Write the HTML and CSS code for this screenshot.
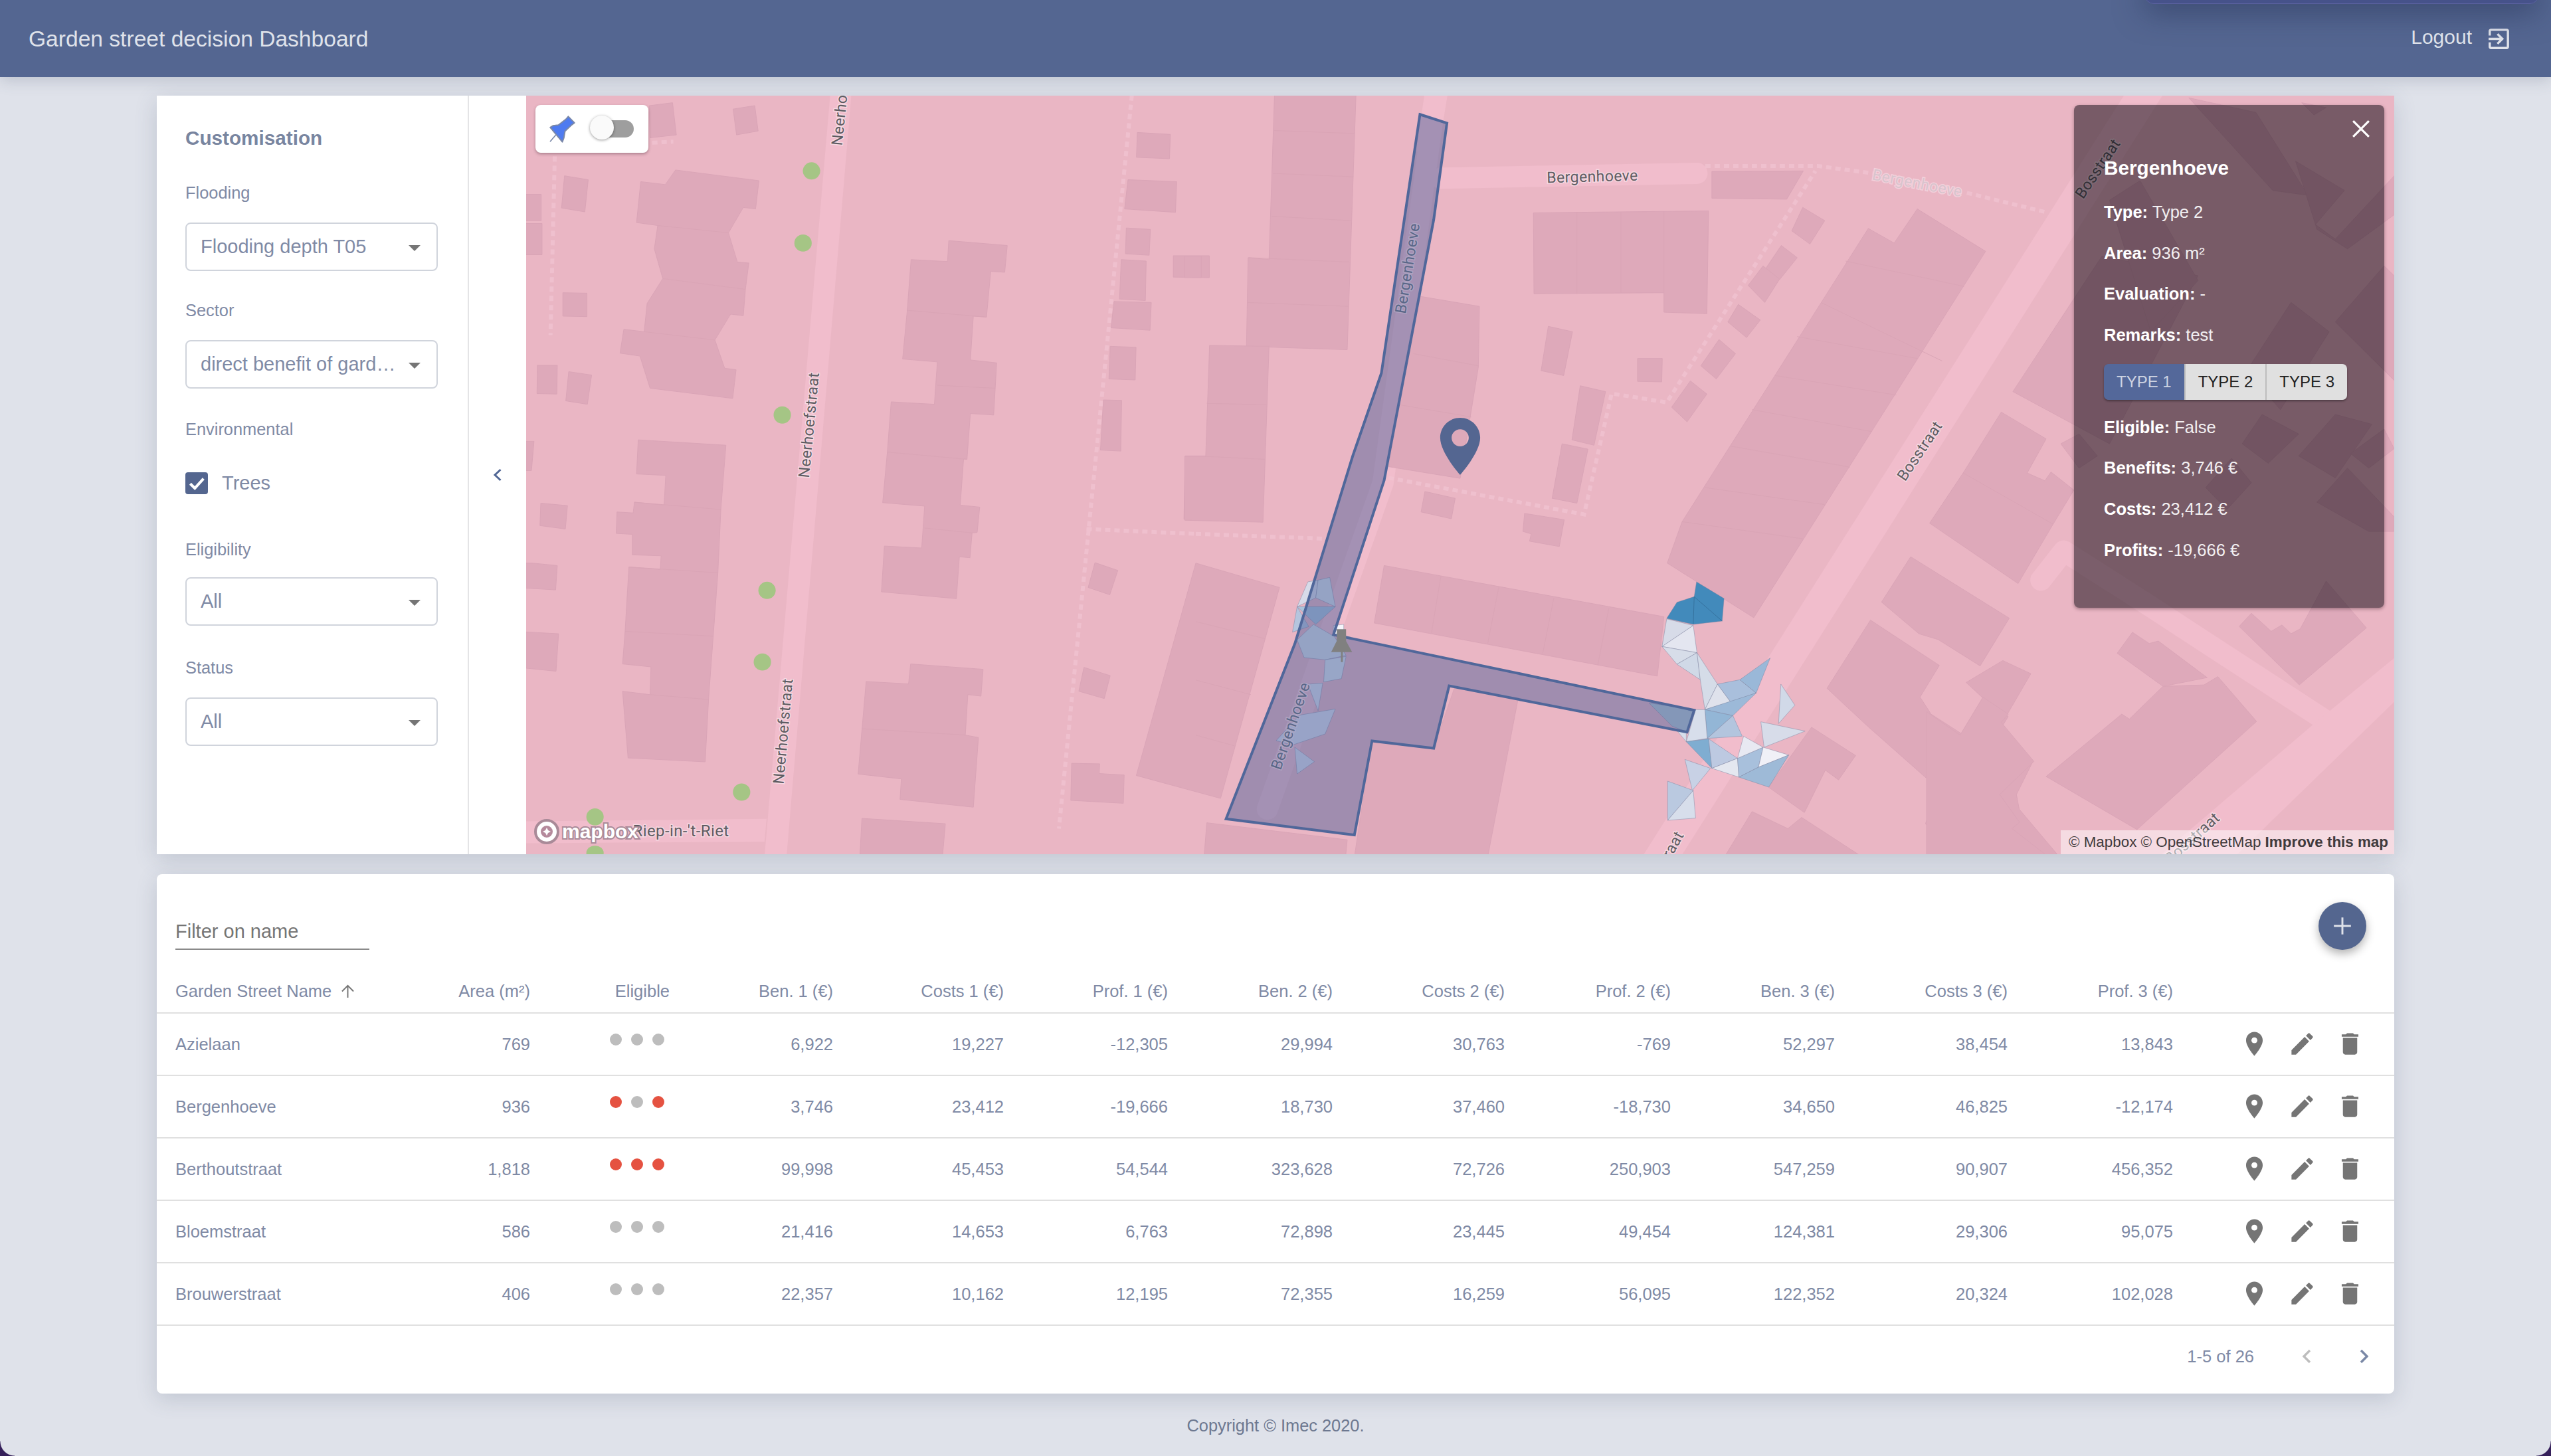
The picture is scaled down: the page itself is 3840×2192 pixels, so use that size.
FILE: index.html
```html
<!DOCTYPE html>
<html lang="en">
<head>
<meta charset="utf-8">
<title>Garden street decision Dashboard</title>
<link rel="stylesheet" href="styles.css">
</head>
<body>
<header class="topbar">
  <div class="topbar-sheet"></div>
  <h1 class="app-title">Garden street decision Dashboard</h1>
  <div class="logout">
    <span class="logout-text">Logout</span>
    <svg class="logout-icon" viewBox="0 0 24 24"><path d="M10.09 15.59L11.5 17l5-5-5-5-1.41 1.41L12.67 11H3v2h9.67l-2.58 2.59zM19 3H5c-1.11 0-2 .9-2 2v4h2V5h14v14H5v-4H3v4c0 1.1.89 2 2 2h14c1.1 0 2-.9 2-2V5c0-1.1-.9-2-2-2z"/></svg>
  </div>
</header>

<main class="content">
  <section class="map-card">
    <aside class="sidebar">
      <h2 class="side-title">Customisation</h2>
      <div class="field-label gap-flooding">Flooding</div>
      <div class="select gap-select"><span class="select-text">Flooding depth T05</span><i class="caret"></i></div>
      <div class="field-label gap-sector">Sector</div>
      <div class="select gap-select"><span class="select-text">direct benefit of garden streets</span><i class="caret"></i></div>
      <div class="field-label gap-env">Environmental</div>
      <label class="check-row">
        <span class="checkbox"><svg viewBox="0 0 24 24"><path d="M5 12.5l5 5L19.5 7" /></svg></span>
        <span>Trees</span>
      </label>
      <div class="field-label gap-elig">Eligibility</div>
      <div class="select gap-select-b"><span class="select-text">All</span><i class="caret"></i></div>
      <div class="field-label gap-status">Status</div>
      <div class="select gap-select"><span class="select-text">All</span><i class="caret"></i></div>
    </aside>
    <div class="collapse">
      <svg class="collapse-icon" viewBox="0 0 14 20"><path d="M11.5 2L3 10l8.5 8"/></svg>
    </div>
    <div class="map">
      <svg class="map-svg" viewBox="792 144 2812 1142" preserveAspectRatio="none">
        <rect class="land" x="792" y="144" width="2812" height="1142"/>

        <!-- roads, page coordinates -->
        <polygon class="road" points="3197,144 3255,144 2530,1290 2472,1290"/>

        <g transform="translate(800 140) scale(.63776 .73342)">
          <polygon class="road" points="705,5 755,5 602,1568 550,1568"/>
          <polygon class="road" points="-20,1495 555,1490 550,1537 -20,1540"/>
          <path class="foot" d="M55 130L45 497M1417 5L1245 1510M1310 895L1568 905M285 102L335 100"/>
        </g>

        <g transform="translate(1800 140) scale(.82908 .73342)">
          <polygon class="road" points="415,5 457,5 440,120 400,120"/>
          <path class="road-line" d="M436 5L340 800L130 1470"/>
          <path class="road-line" d="M445 175L910 165"/>
          <path class="foot" d="M0 905L235 915M350 790L705 865L755 617L855 635L1125 160M925 150L1130 150L1230 165M1400 205L1545 245"/>
        </g>

        <g transform="translate(2900 140) scale(.45918 .73342)">
          <path class="road-line" d="M375 1000L450 940L700 1040L1300 1285"/>
          <polygon class="road" points="1533,1160 1533,1250 1010,1568 760,1568 1270,1295"/>
        </g>

        <!-- buildings: west block -->
        <g class="blds" transform="translate(800 140) scale(.63776 .73342)">
          <polygon points="278,26 333,20 342,86 280,92"/>
          <polygon points="476,33 527,26 535,78 484,86"/>
          <polygon points="78,170 134,178 126,244 71,236"/>
          <polygon points="-20,208 23,208 23,262 -20,262"/>
          <polygon points="-20,268 25,268 25,332 -20,332"/>
          <polygon points="74,410 131,411 131,459 74,458"/>
          <polygon points="258,182 316,188 340,158 537,180 529,238 500,235 465,287 486,347 513,349 505,403 500,457 470,454 433,507 456,565 483,568 475,627 280,606 256,540 209,534 218,485 266,490 273,432 310,381 290,320 298,272 248,266"/>
          <polygon points="14,559 61,559 60,618 13,617"/>
          <polygon points="88,572 142,579 132,639 81,632"/>
          <polygon points="252,712 459,723 447,855 440,985 429,1115 418,1245 410,1373 228,1365 215,1228 280,1235 282,1178 215,1172 221,1105 230,973 304,978 306,950 238,948 238,906 200,904 202,860 240,862 243,840 313,846 317,785 248,782"/>
          <polygon points="22,842 85,847 80,895 20,888"/>
          <polygon points="2,965 61,970 57,1020 -20,1016 -20,965"/>
          <polygon points="-20,1106 64,1110 58,1187 -20,1180"/>
          <polygon points="-20,715 6,715 0,775 -20,775"/>
          <polygon points="985,303 1123,313 1117,368 1084,366 1074,460 1043,458 1036,548 1098,554 1091,661 1036,658 1028,752 1020,751 1012,846 1058,850 1052,902 1040,903 1035,954 1010,952 1003,1038 826,1024 833,930 921,934 928,848 829,841 840,737 849,634 951,639 958,552 876,546 887,446 896,342 982,346"/>
          <polygon points="895,1172 1066,1183 1061,1238 1030,1235 1024,1318 1055,1323 1043,1466 870,1450 873,1408 771,1398 790,1208 890,1213"/>
          <polygon points="780,1489 977,1500 970,1568 775,1568"/>
          <polygon points="1430,81 1508,85 1506,135 1428,132"/>
          <polygon points="1408,178 1523,182 1520,245 1400,238"/>
          <polygon points="1404,277 1461,280 1458,333 1402,330"/>
          <polygon points="1392,342 1451,345 1449,426 1388,423"/>
          <polygon points="1375,428 1463,430 1460,487 1368,482"/>
          <polygon points="1366,520 1427,522 1425,589 1363,587"/>
          <polygon points="1350,630 1393,631 1391,735 1343,733"/>
          <polygon points="1515,334 1600,334 1600,379 1515,378"/>
          <polygon points="1543,745 1600,745 1600,877 1540,875"/>
          <polygon points="1330,964 1384,980 1365,1030 1314,1015"/>
          <polygon points="1304,1179 1366,1196 1352,1243 1292,1228"/>
          <polygon points="1275,1376 1341,1377 1340,1397 1399,1400 1397,1458 1273,1452"/>
          <path class="seam" d="M298 272L465 287M310 381L505 403M266 490L433 507M243 840L447 855M230 973L440 985M221 1105L429 1115M280 1235L418 1245M887 446L1074 460M958 600L1093 606M840 737L1028 752M928 893L1040 903M780 1305L1024 1318"/>
        </g>

        <!-- buildings: central block -->
        <g class="blds" transform="translate(1800 140) scale(.82908 .73342)">
          <polygon points="-108,1401 0,965 152,1015 45,1448"/>
          <polygon points="143,0 291,0 275,527 92,520 95,338 133,342"/>
          <polygon points="25,518 133,520 122,881 -20,877 -20,746 18,746"/>
          <polygon points="-20,335 10,335 10,379 -20,379"/>
          <polygon points="405,417 515,438 513,563 480,791 350,767"/>
          <polygon points="613,246 931,242 928,453 850,450 850,410 614,412"/>
          <polygon points="937,161 1103,160 1073,218 937,216"/>
          <polygon points="640,479 684,490 668,580 627,570"/>
          <polygon points="698,601 744,613 723,723 683,712"/>
          <polygon points="665,720 712,731 692,842 647,832"/>
          <polygon points="802,545 847,545 846,593 802,592"/>
          <polygon points="416,818 471,832 464,874 409,860"/>
          <polygon points="597,863 669,876 660,931 606,920 609,905 594,900"/>
          <polygon points="1102,235 1142,262 1115,310 1082,283"/>
          <polygon points="1063,313 1092,338 1060,383 1035,360"/>
          <polygon points="1030,355 1060,382 1033,430 1003,395"/>
          <polygon points="985,434 1025,466 1000,502 966,470"/>
          <polygon points="950,506 980,535 945,587 917,560"/>
          <polygon points="898,591 928,618 892,675 864,645"/>
          <polygon points="1221,278 1268,308 1310,238 1434,325 1013,1077 856,965 883,880"/>
          <polygon points="342,970 850,1075 838,1197 324,1088"/>
          <polygon points="470,1220 585,1245 530,1568 288,1568 320,1330 432,1345"/>
          <polygon points="20,1498 275,1533 272,1568 15,1568"/>
          <polygon points="1298,952 1477,1078 1424,1176 1348,1122 1313,1110 1245,1045"/>
          <polygon points="1225,1082 1350,1175 1315,1240 1335,1275 1390,1315 1430,1240 1475,1280 1410,1400 1370,1450 1220,1300 1146,1222"/>
          <polygon points="1370,1338 1520,1372 1490,1440 1495,1470 1568,1568 1380,1568 1325,1500"/>
          <polygon points="1118,1302 1198,1360 1167,1410 1143,1390 1105,1477 1040,1425"/>
          <polygon points="1100,1487 1210,1568 960,1568 1010,1475 1075,1510"/>
          <path class="seam" d="M142 77L288 83M140 165L286 172M138 253L282 262M96 338L279 347M93 430L277 438M20 637L128 640M18 746L125 752M395 535L513 560M370 640L500 665M0 1085L125 1120M0 1205L100 1235M0 1318L70 1340M692 245L692 412M772 245L772 410M850 243L850 410M445 992L428 1108M550 1015L530 1130M650 1037L630 1150M750 1058L730 1173M1180 345L1395 397M1135 430L1355 550M1092 500L1310 545M1052 580L1272 620M1010 650L1228 695M972 725L1188 768M925 810L1142 845M883 880L1102 915"/>
        </g>

        <!-- buildings: east block -->
        <g class="blds" transform="translate(2900 140) scale(.45918 .73342)">
          <polygon points="283,613 575,335 890,375 600,720"/>
          <polygon points="120,780 245,655 392,710 330,780 388,796 408,778 483,815 415,885 300,1007 10,883"/>
          <polygon points="130,1210 250,1165 342,1192 265,1275 190,1245"/>
          <polygon points="0,1270 110,1318 185,1240 268,1275 245,1292 352,1372 240,1440 305,1497 280,1510 400,1568 0,1568"/>
          <polygon points="392,1403 640,1275 665,1285 775,1218 910,1215 955,1198 1082,1290 690,1512"/>
          <polygon points="625,1150 675,1107 730,1130 760,1125 920,1200 775,1218"/>
          <polygon points="1025,1095 1065,1068 1130,1105 1165,1092 1195,1110 1225,1100 1310,1002 1442,1098 1222,1215"/>
          <polygon points="860,10 1080,40 1250,210 1135,200"/>
          <polygon points="1210,140 1370,200 1275,270 1340,300 1533,170 1533,250 1380,320 1280,280"/>
          <polygon points="1230,20 1310,30 1270,45"/>
          <polygon points="600,220 700,180 890,385 735,490"/>
          <polygon points="1050,570 1195,430 1320,490 1160,650"/>
          <polygon points="1340,470 1500,355 1533,375 1533,590"/>
          <polygon points="1035,720 1100,660 1220,700 1120,760"/>
          <polygon points="1220,745 1340,660 1460,680 1340,790"/>
          <polygon points="1390,740 1500,690 1533,730 1450,770"/>
          <polygon points="915,810 1000,750 1065,800 985,855"/>
          <polygon points="1280,840 1380,770 1533,870 1533,900 1450,900"/>
          <polygon points="440,720 500,700 560,745 500,770"/>
          <path class="seam" d="M120 780L415 885"/>
        </g>

        <!-- trees -->
        <g class="trees" transform="translate(800 140) scale(.63776 .73342)">
          <ellipse cx="661" cy="160" rx="20.5" ry="17.7"/>
          <ellipse cx="641" cy="308" rx="20.5" ry="17.7"/>
          <ellipse cx="592" cy="661" rx="20.5" ry="17.7"/>
          <ellipse cx="556" cy="1021" rx="20.5" ry="17.7"/>
          <ellipse cx="545" cy="1168" rx="20.5" ry="17.7"/>
          <ellipse cx="496" cy="1435" rx="20.5" ry="17.7"/>
          <ellipse cx="150" cy="1486" rx="20.5" ry="17.7"/>
          <ellipse cx="150" cy="1560" rx="20.5" ry="15"/>
        </g>

        <!-- flood triangles -->
        <g class="flood" transform="translate(1700 800) scale(.70153 .33333)">
          <polygon fill="#428abb" points="1217,228 1276,303 1272,405 1210,420 1153,393 1175,320 1212,295"/>
          <path class="flood-seam" d="M1212 295L1210 420M1212 295L1272 405"/>
          <polygon fill="#d7dbe8" points="1153,395 1210,425 1143,520"/>
          <polygon fill="#e4e6f0" points="1210,425 1218,548 1143,520"/>
          <polygon fill="#d7dde9" points="1143,520 1218,548 1175,600"/>
          <polygon fill="#d0d9e7" points="1218,548 1175,600 1225,670"/>
          <polygon fill="#d5dce8" points="1218,548 1262,690 1235,805 1225,670"/>
          <polygon fill="#dfe2ec" points="1262,690 1290,770 1235,805"/>
          <polygon fill="#a9bfdc" points="1262,690 1310,670 1345,730 1290,770"/>
          <polygon fill="#9ab8d8" points="1310,670 1375,572 1345,730"/>
          <polygon fill="#9cb9d8" points="1235,805 1345,730 1295,832"/>
          <polygon fill="#93b6d6" points="1235,805 1295,832 1240,935"/>
          <polygon fill="#b3c5de" points="1295,832 1315,925 1240,935"/>
          <polygon fill="#d7deeb" points="1215,805 1235,805 1240,935 1195,950"/>
          <polygon fill="#b7c9d4" points="1115,775 1215,805 1195,905 1165,880"/>
          <polygon fill="#d7deeb" points="1175,900 1195,905 1195,950"/>
          <polygon fill="#7fadd1" points="1195,950 1243,937 1250,1070"/>
          <polygon fill="#bdc9e1" points="1243,937 1305,1025 1250,1070"/>
          <polygon fill="#e4e7f0" points="1250,1070 1305,1025 1308,1110"/>
          <polygon fill="#a8c0dc" points="1305,1025 1360,975 1350,1065 1308,1110"/>
          <polygon fill="#e8e9f2" points="1318,925 1360,975 1305,1025"/>
          <polygon fill="#d7dce9" points="1355,860 1450,902 1362,975"/>
          <polygon fill="#f0f0f7" points="1360,975 1415,1010 1350,1065"/>
          <polygon fill="#9ebad7" points="1415,1010 1372,1155 1308,1110 1350,1065"/>
          <polygon fill="#d1d9e8" points="1398,690 1428,785 1393,868"/>
          <polygon fill="#c8d1e5" points="1192,1030 1247,1070 1208,1170"/>
          <polygon fill="#bac9e0" points="1155,1128 1210,1170 1155,1305"/>
          <polygon fill="#d7deeb" points="1210,1170 1215,1295 1155,1305"/>
          <polygon fill="#d7dbe9" points="383,228 405,220 400,300 360,340"/>
          <polygon fill="#d5deea" points="405,220 430,208 442,340 400,300"/>
          <polygon fill="#aac4dc" points="360,340 442,340 400,420"/>
          <polygon fill="#b5c5de" points="360,340 385,430 350,455"/>
          <polygon fill="#d5deea" points="395,420 440,475 465,560 420,580 375,570 360,490"/>
          <polygon fill="#dbe3ee" points="420,580 465,565 455,665 417,680"/>
          <polygon fill="#dbe0ee" points="383,690 415,685 405,810"/>
          <polygon fill="#dbdfee" points="365,830 442,802 420,915 350,965 315,945"/>
          <polygon fill="#dbdfee" points="355,975 397,1040 360,1095"/>
          <polygon fill="#f5f5fa" points="438,425 460,420 460,470 437,470"/>
        </g>

        <!-- selected street -->
        <g transform="translate(1800 140) scale(.82908 .73342)">
          <polygon class="street" points="407,44 456,62 432,260 342,795 250,1112 905,1267 892,1312 460,1217 432,1345 320,1330 288,1523 55,1490 180,1130 285,745 337,575"/>
        </g>

        <!-- thumbtack on the street -->
        <g transform="translate(1700 800) scale(.70153 .33333)">
          <path class="tack" d="M445 442H465V495L478 545H458V590H454V545H433L445 495Z"/>
        </g>

        <!-- place marker -->
        <path class="marker" transform="translate(2146.4 620.4) scale(4.3)" d="M12 2C8.13 2 5 5.13 5 9c0 5.25 7 13 7 13s7-7.75 7-13c0-3.87-3.13-7-7-7zm0 10c-1.66 0-3-1.34-3-3s1.34-3 3-3 3 1.34 3 3-1.34 3-3 3z"/>

        <!-- labels -->
        <text class="lbl" transform="translate(1218 640) rotate(-84.5)">Neerhoefstraat</text>
        <text class="lbl" transform="translate(1179 1101) rotate(-85)">Neerhoefstraat</text>
        <text class="lbl lbl-start" transform="translate(1260 219) rotate(-84)">Neerhoefstraat</text>
        <text class="lbl" transform="translate(2397 266) rotate(-1.5)">Bergenhoeve</text>
        <text class="lbl lbl-pale" transform="translate(2886 276) rotate(11)">Bergenhoeve</text>
        <text class="lbl lbl-street" transform="translate(2119 404) rotate(-81)">Bergenhoeve</text>
        <text class="lbl lbl-street" transform="translate(1943 1093) rotate(-71)">Bergenhoeve</text>
        <text class="lbl" transform="translate(2890 679) rotate(-56)">Bosstraat</text>
        <text class="lbl" transform="translate(2504 1298) rotate(-61)">Bosstraat</text>
        <text class="lbl" transform="translate(3158 254) rotate(-56)">Bosstraat</text>
        <text class="lbl" transform="translate(3300 1262) rotate(-42)">Bosstraat</text>
        <text class="lbl lbl-place" x="1025" y="1251">Riep-in-'t-Riet</text>

        <!-- mapbox wordmark -->
        <circle class="mb-ring" cx="823" cy="1252" r="17"/>
        <circle class="mb-dot" cx="823" cy="1252" r="9"/>
        <path class="mb-star" d="M823 1246l2 4 4 2-4 2-2 4-2-4-4-2 4-2z"/>
        <text class="mb-text" x="846" y="1262">mapbox</text>
      </svg>

      <div class="pin-toggle">
        <svg class="pin-icon" viewBox="84 64 118 124">
          <path class="pin-needle" d="M115 150L87 183"/>
          <path class="pin-body" d="M170 68L198 97L186 106L155 135L150 165L143 184L88 118L100 110L125 107L160 80Z"/>
        </svg>
        <div class="switch"><span class="switch-thumb"></span></div>
      </div>

      <div class="popup">
        <svg class="popup-close" viewBox="0 0 26 26"><path d="M2 2L24 24M24 2L2 24"/></svg>
        <h3 class="popup-title">Bergenhoeve</h3>
        <p><b>Type:</b> Type 2</p>
        <p><b>Area:</b> 936 m²</p>
        <p><b>Evaluation:</b> -</p>
        <p><b>Remarks:</b> test</p>
        <div class="type-group">
          <span class="type-btn is-active">TYPE 1</span>
          <span class="type-btn">TYPE 2</span>
          <span class="type-btn">TYPE 3</span>
        </div>
        <p><b>Eligible:</b> False</p>
        <p><b>Benefits:</b> 3,746 €</p>
        <p><b>Costs:</b> 23,412 €</p>
        <p><b>Profits:</b> -19,666 €</p>
      </div>

      <div class="attribution"><span>© Mapbox © OpenStreetMap</span><b>Improve this map</b></div>
    </div>
  </section>

  <section class="table-card">
    <div class="toolbar">
      <div class="filter">Filter on name</div>
      <button class="fab"><svg viewBox="0 0 24 24"><path d="M19 12.8h-6.2V19h-1.6v-6.2H5v-1.6h6.2V5h1.6v6.2H19z"/></svg></button>
    </div>
    <table class="grid">
      <colgroup>
        <col class="c-name"><col class="c-area"><col class="c-elig"><col class="c-b1"><col class="c-c1"><col class="c-p1"><col class="c-b2"><col class="c-c2"><col class="c-p2"><col class="c-b3"><col class="c-c3"><col class="c-p3"><col class="c-act">
      </colgroup>
      <thead>
        <tr>
          <th class="name-cell">Garden Street Name<svg class="sort" viewBox="0 0 22 22"><path d="M11 21V2M2 11l9-9 9 9"/></svg></th>
          <th>Area (m²)</th><th>Eligible</th><th>Ben. 1 (€)</th><th>Costs 1 (€)</th><th>Prof. 1 (€)</th><th>Ben. 2 (€)</th><th>Costs 2 (€)</th><th>Prof. 2 (€)</th><th>Ben. 3 (€)</th><th>Costs 3 (€)</th><th>Prof. 3 (€)</th><th></th>
        </tr>
      </thead>
      <tbody>
        <tr>
          <td class="name-cell">Azielaan</td><td>769</td>
          <td><div class="dots"><i class="dot"></i><i class="dot"></i><i class="dot"></i></div></td>
          <td>6,922</td><td>19,227</td><td>-12,305</td><td>29,994</td><td>30,763</td><td>-769</td><td>52,297</td><td>38,454</td><td>13,843</td>
          <td><div class="actions"><svg viewBox="0 0 24 24"><path d="M12 2C8.13 2 5 5.13 5 9c0 5.25 7 13 7 13s7-7.75 7-13c0-3.87-3.13-7-7-7zm0 9.5c-1.38 0-2.5-1.12-2.5-2.5s1.12-2.5 2.5-2.5 2.5 1.12 2.5 2.5-1.12 2.5-2.5 2.5z"/></svg><svg viewBox="0 0 24 24"><path d="M3 17.25V21h3.75L17.81 9.94l-3.75-3.75L3 17.25zM20.71 7.04c.39-.39.39-1.02 0-1.41l-2.34-2.34c-.39-.39-1.02-.39-1.41 0l-1.83 1.83 3.75 3.75 1.83-1.83z"/></svg><svg viewBox="0 0 24 24"><path d="M6 19c0 1.1.9 2 2 2h8c1.1 0 2-.9 2-2V7H6v12zM19 4h-3.5l-1-1h-5l-1 1H5v2h14V4z"/></svg></div></td>
        </tr>
        <tr>
          <td class="name-cell">Bergenhoeve</td><td>936</td>
          <td><div class="dots"><i class="dot dot-red"></i><i class="dot"></i><i class="dot dot-red"></i></div></td>
          <td>3,746</td><td>23,412</td><td>-19,666</td><td>18,730</td><td>37,460</td><td>-18,730</td><td>34,650</td><td>46,825</td><td>-12,174</td>
          <td><div class="actions"><svg viewBox="0 0 24 24"><path d="M12 2C8.13 2 5 5.13 5 9c0 5.25 7 13 7 13s7-7.75 7-13c0-3.87-3.13-7-7-7zm0 9.5c-1.38 0-2.5-1.12-2.5-2.5s1.12-2.5 2.5-2.5 2.5 1.12 2.5 2.5-1.12 2.5-2.5 2.5z"/></svg><svg viewBox="0 0 24 24"><path d="M3 17.25V21h3.75L17.81 9.94l-3.75-3.75L3 17.25zM20.71 7.04c.39-.39.39-1.02 0-1.41l-2.34-2.34c-.39-.39-1.02-.39-1.41 0l-1.83 1.83 3.75 3.75 1.83-1.83z"/></svg><svg viewBox="0 0 24 24"><path d="M6 19c0 1.1.9 2 2 2h8c1.1 0 2-.9 2-2V7H6v12zM19 4h-3.5l-1-1h-5l-1 1H5v2h14V4z"/></svg></div></td>
        </tr>
        <tr>
          <td class="name-cell">Berthoutstraat</td><td>1,818</td>
          <td><div class="dots"><i class="dot dot-red"></i><i class="dot dot-red"></i><i class="dot dot-red"></i></div></td>
          <td>99,998</td><td>45,453</td><td>54,544</td><td>323,628</td><td>72,726</td><td>250,903</td><td>547,259</td><td>90,907</td><td>456,352</td>
          <td><div class="actions"><svg viewBox="0 0 24 24"><path d="M12 2C8.13 2 5 5.13 5 9c0 5.25 7 13 7 13s7-7.75 7-13c0-3.87-3.13-7-7-7zm0 9.5c-1.38 0-2.5-1.12-2.5-2.5s1.12-2.5 2.5-2.5 2.5 1.12 2.5 2.5-1.12 2.5-2.5 2.5z"/></svg><svg viewBox="0 0 24 24"><path d="M3 17.25V21h3.75L17.81 9.94l-3.75-3.75L3 17.25zM20.71 7.04c.39-.39.39-1.02 0-1.41l-2.34-2.34c-.39-.39-1.02-.39-1.41 0l-1.83 1.83 3.75 3.75 1.83-1.83z"/></svg><svg viewBox="0 0 24 24"><path d="M6 19c0 1.1.9 2 2 2h8c1.1 0 2-.9 2-2V7H6v12zM19 4h-3.5l-1-1h-5l-1 1H5v2h14V4z"/></svg></div></td>
        </tr>
        <tr>
          <td class="name-cell">Bloemstraat</td><td>586</td>
          <td><div class="dots"><i class="dot"></i><i class="dot"></i><i class="dot"></i></div></td>
          <td>21,416</td><td>14,653</td><td>6,763</td><td>72,898</td><td>23,445</td><td>49,454</td><td>124,381</td><td>29,306</td><td>95,075</td>
          <td><div class="actions"><svg viewBox="0 0 24 24"><path d="M12 2C8.13 2 5 5.13 5 9c0 5.25 7 13 7 13s7-7.75 7-13c0-3.87-3.13-7-7-7zm0 9.5c-1.38 0-2.5-1.12-2.5-2.5s1.12-2.5 2.5-2.5 2.5 1.12 2.5 2.5-1.12 2.5-2.5 2.5z"/></svg><svg viewBox="0 0 24 24"><path d="M3 17.25V21h3.75L17.81 9.94l-3.75-3.75L3 17.25zM20.71 7.04c.39-.39.39-1.02 0-1.41l-2.34-2.34c-.39-.39-1.02-.39-1.41 0l-1.83 1.83 3.75 3.75 1.83-1.83z"/></svg><svg viewBox="0 0 24 24"><path d="M6 19c0 1.1.9 2 2 2h8c1.1 0 2-.9 2-2V7H6v12zM19 4h-3.5l-1-1h-5l-1 1H5v2h14V4z"/></svg></div></td>
        </tr>
        <tr>
          <td class="name-cell">Brouwerstraat</td><td>406</td>
          <td><div class="dots"><i class="dot"></i><i class="dot"></i><i class="dot"></i></div></td>
          <td>22,357</td><td>10,162</td><td>12,195</td><td>72,355</td><td>16,259</td><td>56,095</td><td>122,352</td><td>20,324</td><td>102,028</td>
          <td><div class="actions"><svg viewBox="0 0 24 24"><path d="M12 2C8.13 2 5 5.13 5 9c0 5.25 7 13 7 13s7-7.75 7-13c0-3.87-3.13-7-7-7zm0 9.5c-1.38 0-2.5-1.12-2.5-2.5s1.12-2.5 2.5-2.5 2.5 1.12 2.5 2.5-1.12 2.5-2.5 2.5z"/></svg><svg viewBox="0 0 24 24"><path d="M3 17.25V21h3.75L17.81 9.94l-3.75-3.75L3 17.25zM20.71 7.04c.39-.39.39-1.02 0-1.41l-2.34-2.34c-.39-.39-1.02-.39-1.41 0l-1.83 1.83 3.75 3.75 1.83-1.83z"/></svg><svg viewBox="0 0 24 24"><path d="M6 19c0 1.1.9 2 2 2h8c1.1 0 2-.9 2-2V7H6v12zM19 4h-3.5l-1-1h-5l-1 1H5v2h14V4z"/></svg></div></td>
        </tr>
      </tbody>
    </table>
    <div class="pager">
      <span class="pager-text">1-5 of 26</span>
      <svg class="pager-prev" viewBox="0 0 16 24"><path d="M13 3L4 12l9 9"/></svg>
      <svg class="pager-next" viewBox="0 0 16 24"><path d="M3 3l9 9-9 9"/></svg>
    </div>
  </section>

  <footer class="copyright">Copyright © Imec 2020.</footer>
</main>
</body>
</html>
```

FILE: styles.css
```css
* { box-sizing: border-box; }

html, body { margin: 0; padding: 0; }

body {
  position: relative;
  width: 3840px;
  height: 2192px;
  overflow: hidden;
  background: #dfe2ea;
  color: #7f8aa5;
  font-family: "Liberation Sans", Arial, sans-serif;
  font-size: 25.5px;
}

body::before,
body::after {
  content: "";
  position: absolute;
  bottom: 0;
  width: 22px;
  height: 22px;
  z-index: 5;
}
body::before { left: 0; background: radial-gradient(circle at 22px 0, transparent 21px, #35205a 22px); }
body::after { right: 0; background: radial-gradient(circle at 0 0, transparent 21px, #35205a 22px); }

/* header */
.topbar {
  position: relative;
  z-index: 2;
  height: 116px;
  background: #546691;
  box-shadow: 0 4px 22px rgba(70, 85, 110, .24);
  display: flex;
  align-items: center;
  justify-content: space-between;
  padding: 0 58px 0 43px;
  overflow: hidden;
  color: #dfe2ea;
}
.topbar-sheet {
  position: absolute;
  top: -30px;
  left: 3228px;
  width: 594px;
  height: 36px;
  border-radius: 14px;
  background: #46528a;
  border: 1px solid #5b62a0;
  box-shadow: 0 10px 46px rgba(25, 35, 70, .5);
}
.app-title {
  margin: 0;
  font-size: 33.6px;
  font-weight: 400;
  position: relative;
  top: 1px;
}
.logout {
  display: flex;
  align-items: center;
  gap: 20px;
  font-size: 30px;
}
.logout-text { position: relative; top: -2px; }
.logout-icon { width: 41px; height: 41px; fill: #dfe2ea; }

/* page */
.content { padding: 28px 236px 0; }

.map-card {
  display: flex;
  height: 1142px;
  background: #fff;
  box-shadow: 0 8px 32px rgba(70, 85, 110, .2);
}

.sidebar {
  width: 470px;
  flex: none;
  padding: 44px 45px 0 43px;
  border-right: 2px solid #e4e4e6;
}
.side-title {
  margin: 0;
  height: 40px;
  line-height: 40px;
  font-size: 29.7px;
  font-weight: 700;
  color: #79859f;
}
.field-label { height: 30px; line-height: 30px; font-size: 25.4px; }
.gap-flooding { margin-top: 47px; }
.gap-sector { margin-top: 44px; }
.gap-env { margin-top: 46px; }
.gap-elig { margin-top: 69px; }
.gap-status { margin-top: 48px; }

.select {
  position: relative;
  height: 73px;
  border: 2px solid #d0d4dc;
  border-radius: 8px;
  padding: 0 60px 0 21px;
  display: flex;
  align-items: center;
  font-size: 29px;
  background: #fff;
}
.gap-select { margin-top: 30px; }
.gap-select-b { margin-top: 27px; }
.select-text { white-space: nowrap; overflow: hidden; text-overflow: ellipsis; }
.caret {
  position: absolute;
  right: 24px;
  top: 32px;
  width: 0;
  height: 0;
  border-left: 9px solid transparent;
  border-right: 9px solid transparent;
  border-top: 9px solid #757575;
}

.check-row {
  margin-top: 50px;
  height: 32px;
  display: flex;
  align-items: center;
  gap: 21px;
  font-size: 29px;
}
.checkbox {
  width: 34px;
  height: 33px;
  border-radius: 4px;
  background: #54668f;
  display: flex;
}
.checkbox svg { width: 100%; height: 100%; fill: none; stroke: #fff; stroke-width: 3; }

.collapse {
  width: 86px;
  flex: none;
  display: flex;
  align-items: center;
  justify-content: center;
}
.collapse-icon { width: 14px; height: 20px; fill: none; stroke: #4f6594; stroke-width: 3; }

/* map */
.map { position: relative; flex: 1; overflow: hidden; }
.map-svg { display: block; width: 100%; height: 100%; }
.land { fill: #eab6c4; }
.road { fill: #f1bdcc; }
.road-line {
  fill: none;
  stroke: #f1bdcc;
  stroke-width: 32px;
  stroke-linecap: round;
  stroke-linejoin: round;
  vector-effect: non-scaling-stroke;
}
.foot {
  fill: none;
  stroke: #f1c4d2;
  stroke-width: 6px;
  stroke-dasharray: 8 6;
  opacity: .75;
  vector-effect: non-scaling-stroke;
}
.blds polygon { fill: #dea9ba; stroke: #daa5b7; stroke-width: 1px; vector-effect: non-scaling-stroke; }
.seam { fill: none; stroke: #daa5b6; stroke-width: 1px; vector-effect: non-scaling-stroke; }
.trees ellipse { fill: #a5c585; }
.flood polygon { stroke: rgba(120, 130, 160, .45); stroke-width: 1px; vector-effect: non-scaling-stroke; }
.flood-seam { fill: none; stroke: rgba(40, 90, 130, .5); stroke-width: 1px; vector-effect: non-scaling-stroke; }
.street {
  fill: rgba(70, 90, 150, .45);
  stroke: #50679a;
  stroke-width: 4px;
  stroke-linejoin: miter;
  vector-effect: non-scaling-stroke;
}
.tack { fill: #808080; }
.marker { fill: #546691; }

.lbl {
  font-family: "Roboto", "Liberation Sans", sans-serif;
  font-size: 23px;
  letter-spacing: .4px;
  text-anchor: middle;
  dominant-baseline: central;
  fill: #5f5c62;
  stroke: #f6d9e2;
  stroke-width: 3px;
  paint-order: stroke;
}
.lbl-start { text-anchor: start; }
.lbl-pale { fill: #d8c4cd; stroke: #f3d0db; }
.lbl-street { fill: #5a6788; stroke: rgba(178, 170, 198, .75); }
.lbl-place { text-anchor: middle; font-size: 24px; }

.mb-ring { fill: #fff; stroke: #a98a98; stroke-width: 4px; }
.mb-dot { fill: #b58a9c; }
.mb-star { fill: #fff; }
.mb-text {
  font-family: "Liberation Sans", sans-serif;
  font-size: 30px;
  font-weight: 700;
  fill: #fff;
  stroke: #a98a98;
  stroke-width: 4px;
  paint-order: stroke;
}

.pin-toggle {
  position: absolute;
  left: 14px;
  top: 14px;
  width: 170px;
  height: 72px;
  border-radius: 8px;
  background: #fff;
  box-shadow: 0 2px 4px rgba(90, 60, 70, .45);
  display: flex;
  align-items: center;
  padding: 0 22px 0 21px;
  gap: 22px;
}
.pin-icon { width: 39px; height: 41px; flex: none; }
.pin-body { fill: #4e7bf0; stroke: #7a88a8; stroke-width: 6; stroke-linejoin: round; }
.pin-needle { fill: none; stroke: #7a88a8; stroke-width: 5; }
.switch {
  position: relative;
  width: 64px;
  height: 26px;
  border-radius: 13px;
  background: #9e9e9e;
  margin-left: 4px;
}
.switch-thumb {
  position: absolute;
  left: -4px;
  top: -7px;
  width: 36px;
  height: 36px;
  border-radius: 50%;
  background: #fafafa;
  box-shadow: 0 1px 4px rgba(0, 0, 0, .4);
}

.popup {
  position: absolute;
  right: 15px;
  top: 14px;
  width: 467px;
  height: 757px;
  padding: 75px 0 0 45px;
  border-radius: 8px;
  background: rgba(5, 0, 10, .5);
  box-shadow: 0 2px 5px rgba(60, 30, 40, .4);
  color: #f2eff1;
  font-size: 25.5px;
}
.popup b { color: #fff; }
.popup p { margin: 0 0 25.7px; line-height: 36px; }
.popup-title {
  margin: 0 0 28px;
  height: 40px;
  line-height: 40px;
  font-size: 29.7px;
  color: #fff;
}
.popup-close {
  position: absolute;
  right: 21px;
  top: 22px;
  width: 28px;
  height: 28px;
  fill: none;
  stroke: #fff;
  stroke-width: 3;
}
.type-group {
  display: flex;
  width: 366px;
  height: 54px;
  margin: 1px 0 23px;
  border-radius: 7px;
  overflow: hidden;
  box-shadow: 0 2px 3px rgba(0, 0, 0, .35);
}
.type-btn {
  flex: 1;
  display: flex;
  align-items: center;
  justify-content: center;
  background: #e0e0e0;
  color: #222;
  font-size: 24px;
  border-left: 2px solid #bdbdbd;
}
.type-btn.is-active { background: #54689a; color: #cdd3e2; border-left: 0; }

.attribution {
  position: absolute;
  right: 0;
  bottom: 0;
  width: 502px;
  height: 36px;
  padding: 0 9px 0 12px;
  display: flex;
  align-items: center;
  justify-content: space-between;
  background: rgba(255, 255, 255, .5);
  color: #403a3d;
  font-size: 22.4px;
  white-space: nowrap;
}

/* table */
.table-card {
  margin-top: 30px;
  height: 782px;
  background: #fff;
  border-radius: 8px;
  box-shadow: 0 8px 32px rgba(70, 85, 110, .2);
}
.toolbar {
  height: 144px;
  display: flex;
  justify-content: space-between;
  align-items: flex-start;
  padding: 42px 42px 0 28px;
}
.filter {
  width: 292px;
  margin-top: 26px;
  height: 46px;
  line-height: 36px;
  border-bottom: 2px solid #8a8a8a;
  font-size: 29px;
  color: #757575;
}
.fab {
  width: 72px;
  height: 72px;
  padding: 0;
  border: 0;
  border-radius: 50%;
  background: #54668f;
  box-shadow: 0 6px 14px rgba(0, 0, 0, .3);
  display: flex;
  align-items: center;
  justify-content: center;
}
.fab svg { width: 44px; height: 44px; fill: #dfe2ea; }

.grid {
  width: 100%;
  table-layout: fixed;
  border-collapse: separate;
  border-spacing: 0;
  font-size: 25.5px;
}
.c-name { width: 364px; }
.c-area { width: 198px; }
.c-elig { width: 210px; }
.c-b1 { width: 246px; }
.c-c1 { width: 257px; }
.c-p1 { width: 247px; }
.c-b2 { width: 248px; }
.c-c2 { width: 259px; }
.c-p2 { width: 250px; }
.c-b3 { width: 247px; }
.c-c3 { width: 260px; }
.c-p3 { width: 249px; }
.c-act { width: 333px; }
.grid th, .grid td {
  padding: 0;
  text-align: right;
  font-weight: 400;
  border-bottom: 2px solid #e0e0e0;
  white-space: nowrap;
}
.grid th { height: 66px; }
.grid td { height: 94px; }
.grid .name-cell { text-align: left; padding-left: 28px; }
.sort {
  width: 21px;
  height: 21px;
  margin-left: 14px;
  vertical-align: -2px;
  fill: none;
  stroke: #757575;
  stroke-width: 2;
}
.dots {
  display: flex;
  gap: 14px;
  padding-left: 120px;
  margin-bottom: 14px;
}
.dot {
  width: 18px;
  height: 18px;
  border-radius: 50%;
  background: #bdbdbd;
}
.dot-red { background: #e55241; }
.actions {
  display: flex;
  justify-content: flex-start;
  padding-left: 101px;
  gap: 29px;
  margin-bottom: 2px;
}
.actions svg { width: 43px; height: 43px; fill: #757575; flex: none; }

.pager {
  height: 102px;
  padding-right: 37px;
  padding-bottom: 10px;
  display: flex;
  align-items: center;
  justify-content: flex-end;
}
.pager-text { margin-right: 71px; }
.pager-prev, .pager-next { width: 16px; height: 24px; fill: none; stroke-width: 3.4; }
.pager-prev { stroke: #bdbdbd; margin-right: 71px; }
.pager-next { stroke: #7a88a6; }

.copyright {
  margin-top: 33px;
  text-align: center;
  font-size: 25.4px;
  line-height: 30px;
  color: #6d7890;
}
```
